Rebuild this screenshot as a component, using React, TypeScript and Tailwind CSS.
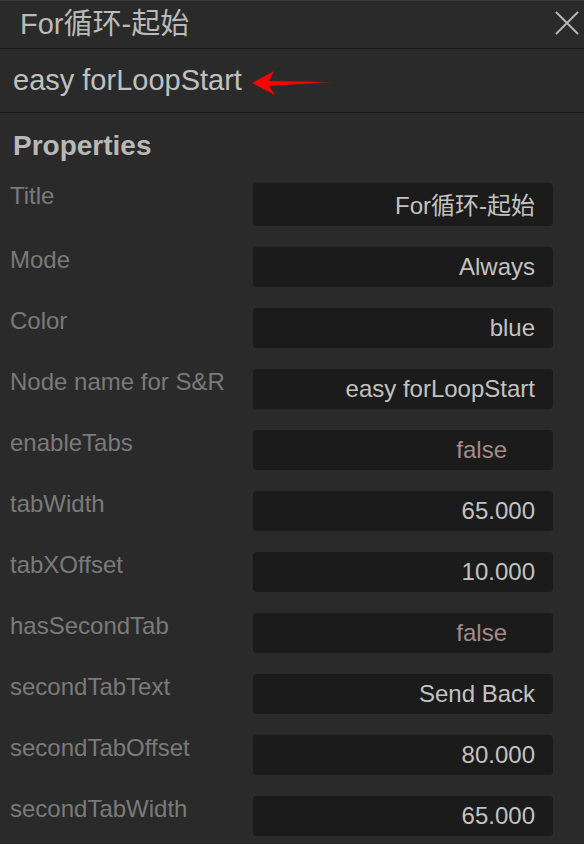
import React from 'react';

interface Prop {
  label: string;
  value: string;
  bool?: boolean;
  tall?: boolean;
}

const props: Prop[] = [
  { label: 'Title', value: 'For循环-起始', tall: true },
  { label: 'Mode', value: 'Always' },
  { label: 'Color', value: 'blue' },
  { label: 'Node name for S&R', value: 'easy forLoopStart' },
  { label: 'enableTabs', value: 'false', bool: true },
  { label: 'tabWidth', value: '65.000' },
  { label: 'tabXOffset', value: '10.000' },
  { label: 'hasSecondTab', value: 'false', bool: true },
  { label: 'secondTabText', value: 'Send Back' },
  { label: 'secondTabOffset', value: '80.000' },
  { label: 'secondTabWidth', value: '65.000' },
];

const font = { fontFamily: '"Liberation Sans", Arial, "Noto Sans CJK SC", sans-serif' };

const App: React.FC = () => {
  return (
    <div className="w-[584px] h-[844px] overflow-hidden bg-[#2a2a2a] border-t border-[#3a3a3a]" style={font}>
      {/* header */}
      <div className="h-[48px] flex items-center justify-between border-b border-[#171717] pl-[20px] pr-[4px]">
        <span className="text-[29px] text-[#bababa] leading-none">For循环-起始</span>
        <svg width="26" height="26" viewBox="0 0 26 26" className="mt-[-4px]">
          <path d="M2 2 L24 24 M24 2 L2 24" stroke="#b4b4b4" strokeWidth="2" />
        </svg>
      </div>

      <div className="h-[64px] flex items-center border-b border-[#171717] pl-[13px]">
        <span className="text-[29px] text-[#c0c0c0] leading-none">easy forLoopStart</span>
        <svg width="84" height="28" viewBox="0 0 84 28" className="ml-[10px] mt-[6px]">
          <defs>
            <linearGradient id="fade" x1="0" y1="0" x2="1" y2="0">
              <stop offset="0" stopColor="#ff0000" />
              <stop offset="0.7" stopColor="#ff0000" />
              <stop offset="1" stopColor="#ff0000" stopOpacity="0.3" />
            </linearGradient>
          </defs>
          <polygon points="0,13 22,1 17,11 82,12 17,16 23,25" fill="url(#fade)" />
        </svg>
      </div>

      <div className="pt-[19px]">
        <div className="pl-[13px] text-[28px] font-bold text-[#b8b8b8] leading-none mb-[23px]">Properties</div>
        <div className="flex flex-col gap-[21px]">
          {props.map((p) => (
            <div key={p.label} className="flex items-start">
              <div className="w-[253px] pl-[10px] text-[24px] text-[#7a7a7a] leading-[26px]">{p.label}</div>
              <div
                className={
                  'w-[300px] rounded-[4px] bg-[#1b1b1b] flex items-center justify-end text-[24px] ' +
                  (p.tall ? 'h-[43px] pt-[3px] ' : 'h-[40px] ') +
                  (p.bool ? 'pr-[46px] text-[#a58a8a]' : 'pr-[18px] text-[#c2c2c2]')
                }
              >
                {p.value}
              </div>
            </div>
          ))}
        </div>
      </div>
    </div>
  );
};

export default App;
